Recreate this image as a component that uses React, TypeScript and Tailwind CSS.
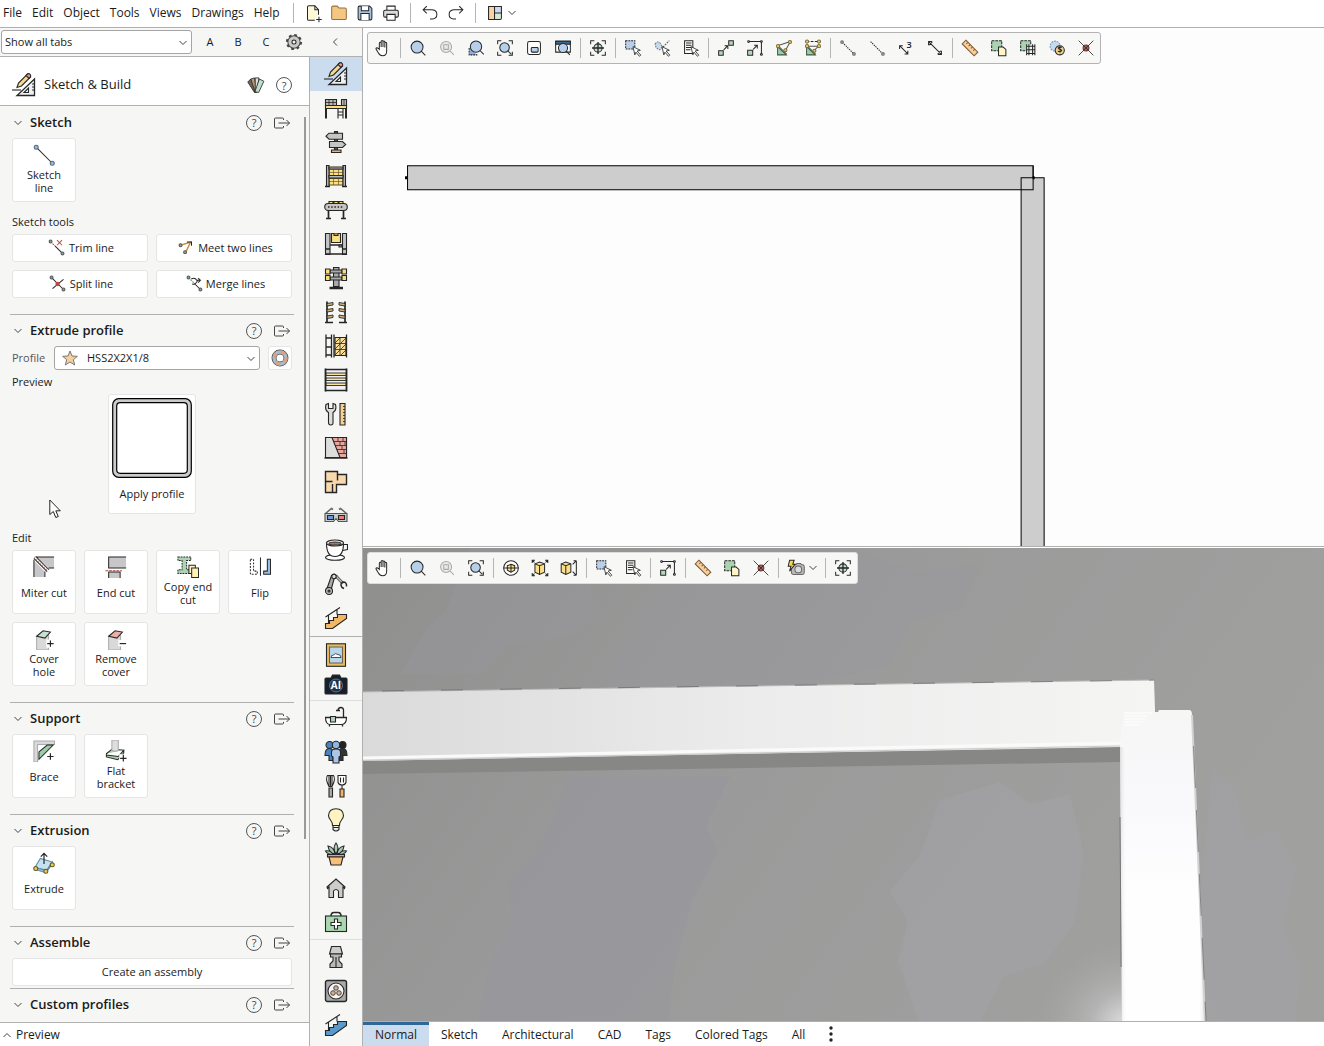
import React from "react";
import clsx from "clsx";

interface IconProps {
  children: React.ReactNode;
  className?: string;
}

const Icon: React.FC<IconProps> = ({ children, className = "h-6 w-6" }) => (
  <svg
    viewBox="0 0 24 24"
    className={clsx("shrink-0", className)}
    fill="none"
    stroke="#262626"
    strokeWidth="1.1"
    aria-hidden="true"
  >
    {children}
  </svg>
);

const Chevron = ({ className }: { className?: string }) => (
  <svg viewBox="0 0 10 10" className={clsx("h-[10px] w-[10px] shrink-0", className)} fill="none" stroke="#444">
    <path d="M1.5 3 5 6.5 8.5 3" />
  </svg>
);

/* shared pieces */

const magnifier = (
  <>
    <circle cx="11" cy="11" r="6.5" fill="#b8cfea" />
    <path d="m15.5 15.5 4.500 4.500" />
  </>
);

const corners = <path d="M4 8V4h4M16 4h4v4M20 16v4h-4M8 20H4v-4" />;

const pointer = <path d="m12 10.500 8 4-3.500.8 4 4.500-1.500 1.200-3.800-4.500-1.200 3z" fill="#fff" strokeWidth=".9" />;

const plus = <path d="M16 13.500v7M12.500 17h7" strokeWidth="1.3" />;

const cube = (
  <>
    <path d="m6.500 7.500 5-2 5.500 2v9l-5.500 2.500-5-2.500z" fill="#fbe089" />
    <path d="m6.500 7.500 5 2 5.500-2M11.500 9.500V19" />
  </>
);

const icons: Record<string, React.ReactNode> = {
  newFile: (
    <>
      <path d="M18 14V8.500L14 4H7.500Q6 4 6 5.500v13Q6 20 7.500 20H14" fill="#fff9d8" />
      <path d="M14 4v4.500h4M18.500 16v6M15.500 19h6" />
    </>
  ),
  folder: <path d="M4 6q0-1.500 1.500-1.500H10l2 2h6.500Q20 6.500 20 8v10q0 1-1 1H5q-1 0-1-1z" fill="#f3c684" stroke="#9c7038" />,
  save: (
    <>
      <path d="M4.500 6q0-1.500 1.500-1.500h11l2.500 2.500v11q0 1.500-1.500 1.500H6q-1.500 0-1.500-1.500z" fill="#a9c1e0" />
      <path d="M8 4.500v5h8v-5M7.500 19.500v-7h9v7" fill="#fff" />
    </>
  ),
  print: (
    <>
      <path d="M7.500 9V4.500h9V9" fill="#fff" />
      <rect x="4" y="9" width="16" height="7.500" rx="1.500" fill="#ddd" />
      <path d="M7.500 13.500h9V20h-9z" fill="#fff" />
    </>
  ),
  undo: <path d="M8.500 4.500 4.500 8.500l4 4M4.500 8.500h10q5 .5 5 5t-5 5H12" />,
  redo: <path d="m15.500 4.500 4 4-4 4M19.500 8.500h-10q-5 .5-5 5t5 5H12" />,
  layout: (
    <>
      <rect x="5" y="5" width="14" height="14" rx="1.500" fill="#d7e9d3" />
      <path d="M5 5h6.500v14H5z" fill="#f8d3a8" />
      <path d="M11.500 5H19v7h-7.500z" fill="#cbdcf0" />
    </>
  ),
  gear: (
    <>
      <circle cx="12" cy="12" r="7.700" strokeDasharray="3 3.050" strokeWidth="2.200" stroke="#444" />
      <circle cx="12" cy="12" r="6.700" fill="#c9c9c9" stroke="#444" />
      <circle cx="12" cy="12" r="2.200" fill="#f6f6f6" />
    </>
  ),
  hand: (
    <path
      d="M8 13.500V7q0-1.200 1-1.200T10 7v4V5q0-1.200 1-1.200t1 1.200v6-5.500q0-1.200 1-1.200t1 1.200v6-4.500q0-1.200 1-1.200T16 7v8.500q0 5-4.500 5-3 0-4.500-3l-2.500-4q-.5-1.500.8-1.700Q6.500 12 8 13.500z"
      fill="#fff"
    />
  ),
  zoom: magnifier,
  zoomPage: (
    <g stroke="#aaa">
      <circle cx="11" cy="11" r="6" fill="#e8e8e8" />
      <path d="m15.500 15.500 4 4M8.500 8.500h5v5h-5z" />
    </g>
  ),
  zoomArea: (
    <>
      <path d="M4.500 12v7.500h9" fill="#8fb1dc" strokeDasharray="2 1" />
      <circle cx="12" cy="10.500" r="6.200" fill="#b8cfea" />
      <path d="m16.500 15 4 4" />
    </>
  ),
  zoomFit: (
    <>
      {corners}
      <circle cx="11.500" cy="11.500" r="5.200" fill="#b8cfea" />
      <path d="m15 15 4 4" />
    </>
  ),
  panel: (
    <>
      <rect x="5" y="5" width="14" height="14" rx="2" fill="#fff" />
      <rect x="9" y="11.500" width="7.500" height="5" rx="1" fill="#b8cfea" />
    </>
  ),
  windowZoom: (
    <>
      <path d="M4 5h16v11.500H4z" fill="#fff" />
      <path d="M4 4.500h16V8H4z" fill="#386a94" />
      <circle cx="12" cy="12" r="5" fill="#b8cfea" />
      <path d="m15.500 15.500 4 4" />
    </>
  ),
  target: (
    <>
      {corners}
      <circle cx="12" cy="12" r="4.500" fill="#c3ddca" />
      <path d="M12 5.500v13M5.500 12h13" strokeWidth="1.400" />
    </>
  ),
  selectArea: (
    <>
      <path d="M4 4h10v9H4z" fill="#b8cfea" strokeDasharray="2 1" />
      {pointer}
    </>
  ),
  selectLine: (
    <>
      <path d="M4.500 8q2-4 5-2l3 5-3 3q-4-1-5-6z" fill="#c8daf0" strokeDasharray="2 1" stroke="#777" />
      <path d="m13 11 7-7" strokeDasharray="2 1" stroke="#555" />
      {pointer}
    </>
  ),
  selectList: (
    <>
      <path d="M5 4h9v14H5z" fill="#fff" />
      <path d="M6.500 6.500h6M6.500 9h6M6.500 11.500h6M6.500 14h5" />
      {pointer}
    </>
  ),
  connect: (
    <>
      <path d="M4 15h5v5H4zM15 4h5v5h-5z" fill="#b5d8bd" />
      <path d="m9.500 14 4.500-4.500M10.500 9.500H14V13" />
    </>
  ),
  moveCorner: (
    <>
      <path d="M5 5h14v14" />
      <path d="M4 14.500h5.500V20H4z" fill="#b5d8bd" />
      <path d="m10 13.500 4-4M11 9h3.500v3.500" />
      <g fill="#fff">
        <circle cx="5" cy="5" r="1" />
        <circle cx="19" cy="5" r="1" />
        <circle cx="19" cy="19" r="1" />
      </g>
    </>
  ),
  angle: (
    <>
      <path d="M5 10.500v9h9.500z" fill="#9dcba8" stroke="#3c5c44" />
      <path d="M5 9.500 19 5M6 10l9 9M19 5l-5 9" stroke="#555" />
      <g fill="#efcb69" stroke="#776a3c">
        <circle cx="5.500" cy="10" r="1.700" />
        <circle cx="18.500" cy="5.500" r="1.700" />
        <circle cx="13.500" cy="14.500" r="1.700" />
      </g>
    </>
  ),
  angleLock: (
    <>
      <path d="M5 10.500v9h9.500z" fill="#9dcba8" stroke="#3c5c44" />
      <path d="M5 5h14" strokeDasharray="3 1.500" />
      <path d="M5 10h14M6 10l9 9M18 10l-5 5" stroke="#555" />
      <g fill="#efcb69" stroke="#776a3c">
        <circle cx="5.500" cy="5" r="1.700" />
        <circle cx="18.500" cy="5" r="1.700" />
        <circle cx="5.500" cy="10" r="1.700" />
        <circle cx="18.500" cy="10" r="1.700" />
        <circle cx="13.500" cy="15" r="1.700" />
      </g>
    </>
  ),
  segment: (
    <>
      <path d="m6 6 12 12" strokeDasharray="1.500 1" />
      <g fill="#999" stroke="#777">
        <circle cx="5.500" cy="5.500" r="1.500" />
        <circle cx="18.500" cy="18.500" r="1.500" />
      </g>
    </>
  ),
  segmentEnd: (
    <>
      <path d="m5 5 13 13" strokeDasharray="1.500 1" />
      <circle cx="18.500" cy="18.500" r="1.500" fill="#999" stroke="#777" />
    </>
  ),
  arrowThree: (
    <>
      <path d="m5 9.500 9 9M5 13V9.500h3.500M14 15v3.500h-3.500" />
      <text x="12.500" y="12" fontSize="10" fontFamily="Open Sans, sans-serif" fontWeight="600" fill="#222" stroke="none">
        3
      </text>
    </>
  ),
  arrowBoth: <path d="m5 5 14 14M5 9V5h4M19 15v4h-4M9 5.500 5.500 9M18.500 15 15 18.500" />,
  ruler: (
    <>
      <path d="M7.500 3.500 20.500 16.500l-4 4L3.500 7.500z" fill="#f8cf9c" stroke="#7b5832" />
      <path d="M9.500 6 8 7.500M12 8.500 10.500 10M14.500 11 13 12.500M17 13.500 15.500 15" stroke="#7b5832" />
    </>
  ),
  copyShape: (
    <>
      <path d="M4 4h11v11H4z" fill="#a9d3b1" strokeDasharray="3 1" />
      <path d="M11.500 11h5l3 2.500v7h-8z" fill="#fff7c9" />
    </>
  ),
  copyTable: (
    <>
      <path d="M4 4h11v11H4z" fill="#a9d3b1" strokeDasharray="3 1" />
      <path d="M10.500 8.500h9v11h-9z" fill="#eef4ee" stroke="none" />
      <path d="M10.500 8v12M19.500 8v12M13 8v12M17 8v12M10.500 10h9M10.500 14h9M10.500 18h9" />
    </>
  ),
  price: (
    <>
      <circle cx="10" cy="10" r="5.500" fill="#c5daf1" stroke="#7692b4" strokeDasharray="2 1" />
      <circle cx="15" cy="14.500" r="5" fill="#f6cf8e" />
      <text x="12.500" y="17.700" fontSize="9" fontFamily="Open Sans, sans-serif" fontWeight="700" fill="#222" stroke="none">
        $
      </text>
    </>
  ),
  cross: (
    <>
      <circle cx="12" cy="12" r="3.200" fill="#a9655c" stroke="#733" />
      <path d="m4 4 16 16M20 4 4 20" strokeWidth=".9" />
    </>
  ),
  orbit: (
    <>
      <circle cx="12" cy="12" r="8" fill="#fff" />
      <path d="m8 9.500 4-1.500 4 1.500v5L12 16.500l-4-2z" fill="#fbe089" />
      <path d="M12 8v8.500M4 12h16" />
    </>
  ),
  cubeFit: (
    <>
      {cube}
      <path d="M3.500 6.500v-3h3M17.500 3.500h3v3M20.500 17.500v3h-3M6.500 20.500h-3v-3M3.500 3.500 6 6M20.500 3.500 18 6M20.500 20.500 18 18M3.500 20.500 6 18" />
    </>
  ),
  cubeSide: (
    <>
      <g transform="translate(-3 0)">{cube}</g>
      <path d="M20 4v16M17 4h3M17 20h3M19.500 4.500 16 8M19.500 19.500 16 16" />
    </>
  ),
  camera: (
    <>
      <path d="M9 8.500h3l1-1.500h4l1 1.500h1q2 0 2 2V17q0 2-2 2H9q-2 0-2-2v-6.500q0-2 2-2z" fill="#bbb" stroke="#666" />
      <circle cx="14.500" cy="13.500" r="3.700" fill="#ddd" stroke="#666" />
      <path d="M5 3.500h5L8.500 8h2.500l-6 7.500L6.500 10h-3z" fill="#f7d64d" />
    </>
  ),
};

const stairs = (fill: string) => (
  <>
    <path d="M1.500 22.500v-5h4v-3h4v-3h4v-3h9v4l-14 10z" fill={fill} />
    <path d="M1.500 11 16 1.500M4.500 9.500v8M13 3.500v5" />
  </>
);

const sketchIcon = (
  <>
    <path d="M22.500 6v16.500H5z" fill="#eef2f6" strokeWidth="1.300" />
    <path d="M16.500 15v4.500H12zM20 11h2M20 14h2M20 17h2" />
    <path d="M0 17h9" />
    <path d="m5 14.500 1.500-4.500 9-9 3 3-9 9z" fill="#f6d98f" />
    <path d="m14 2.500 1.500-1.500q1.500-.8 2.500.3t.5 2.700L17 5.500z" fill="#e39b95" />
  </>
);

interface RailItem {
  label: string;
  icon: React.ReactNode;
}

const railMain: RailItem[] = [
  { label: "Sketch & Build", icon: sketchIcon },
  {
    label: "Mezzanine",
    icon: (
      <>
        <path d="M1.500 3.500h11v6h-11zM17.500 3.500h5v6h-5z" fill="#bbb" />
        <path d="M5 3.500v6M9 3.500v6M1.500 6.500h11M20 3.500v6" strokeWidth=".8" />
        <path d="M1.500 9.500h21v3h-21z" fill="#fbdf7c" />
        <path d="M2 12.500v10M22 12.500v10" strokeWidth="2" />
        <path d="M14 12.500v10M19 12.500v10M14 16h5M14 19h5" />
      </>
    ),
  },
  {
    label: "Signs",
    icon: (
      <>
        <path d="M10.500 1.500h3v20h-3z" fill="#555" />
        <path d="m2 6.200 3-3h13.500v6H5zM5.500 11.500h13l3.200 3-3.200 3h-13z" fill="#c5c5c5" />
        <path d="M7.500 20h9.500v2.500H7.500z" fill="#e7b672" />
      </>
    ),
  },
  {
    label: "Pallet rack",
    icon: (
      <>
        <path d="M5 5h14v6.500H5zM5 14.500h14V21H5z" fill="#fbdf7c" strokeWidth=".8" />
        <path d="M9.500 5v6.500M14.500 5v6.500M9.500 14.500V21M14.500 14.500V21M5 8.500h14M5 17.500h14" stroke="#6b5a2b" strokeWidth=".7" />
        <path d="M2.500 1.500H5v21H2.500zM19 1.500h2.500v21H19z" fill="#bbb" />
        <path d="M5 3h14v2H5zM5 11.500h14v2.500H5z" fill="#bbb" />
        <path d="M1 22.500h5M18 22.500h5" strokeWidth="1.500" />
      </>
    ),
  },
  {
    label: "Conveyor",
    icon: (
      <>
        <path d="M5 3.500h4v2.500H5zM10 3.500h4v2.500h-4zM15 3.500h4v2.500h-4z" fill="#fbdf7c" />
        <rect x=".7" y="5.500" width="22.600" height="7" rx="3.500" fill="#c5c5c5" />
        <path d="M4 9h16" strokeWidth="1.500" strokeDasharray="1.500 1.700" />
        <path d="M4.500 12.500v8M19.500 12.500v8M2 20.500h5M17 20.500h5" strokeWidth="1.700" />
      </>
    ),
  },
  {
    label: "Lift",
    icon: (
      <>
        <path d="M1.500 1.500H6v21H1.500zM18.500 1.500h4v21h-4z" fill="#c5c5c5" />
        <path d="M6 13h12.500M1.500 22h21M1.500 17H6M18.500 17h4" strokeWidth="1.400" />
        <path d="M7.500 1.500h9v9h-9z" fill="#fbdf7c" />
        <path d="M10 1.500v2h4v-2M15 13h3v2h-3z" fill="#a89a78" />
      </>
    ),
  },
  {
    label: "Cantilever",
    icon: (
      <>
        <path d="M9.500 1.500H15v19H9.500z" fill="#aaa" />
        <path d="M6 4h12v3H6zM6 11h12v3H6z" fill="#aaa" />
        <path d="M1.500 3H6v5H1.500zM18 3h4.500v5H18zM1.500 9.500H6v5H1.500zM18 9.500h4.500v5H18z" fill="#fbdf7c" />
        <path d="M5.500 22h13.500" strokeWidth="2.500" />
      </>
    ),
  },
  {
    label: "Arm racks",
    icon: (
      <>
        <path d="M3 1.500v21M21 1.500v21M1 22.500h8M15 22.500h8" strokeWidth="1.700" />
        <path
          d="m3 3.500 6-1v2.500l-6 1zM3 9.500l6-1V11l-6 1zM3 16l6-1v2.500l-6 1zM21 3.500l-6-1v2.500l6 1zM21 9.500l-6-1V11l6 1zM21 16l-6-1v2.500l6 1z"
          fill="#d0b680"
          strokeWidth=".9"
        />
      </>
    ),
  },
  {
    label: "Shelving",
    icon: (
      <>
        <path d="M2 .5v23M7.500 .5v23M2 4h5.500M2 13h5.500M2 21h5.500" strokeWidth="1.300" />
        <path d="M11 3.500h11v18H11z" fill="#fbdf9c" />
        <path d="M10 .5v23M22.500 .5v23" strokeWidth="1.300" />
        <path d="M16 3.500v18M11 9.500h11M11 15.500h11M11 9l5-5M17 9l5-5M11 15l5-5M17 15l5-5M11 21l5-5M17 21l5-5" strokeWidth=".8" />
      </>
    ),
  },
  {
    label: "Shelves",
    icon: (
      <>
        <path d="M1.500 1.500h21v21h-21z" fill="#eef1f5" strokeWidth="1.400" />
        <path d="M2 5h20v2.500H2zM2 10h20v2.500H2zM2 15h20v2.500H2z" fill="#fbe3a4" strokeWidth=".9" />
        <path d="M1.500 .5v23M22.500 .5v23" strokeWidth="1.500" />
      </>
    ),
  },
  {
    label: "Tools",
    icon: (
      <>
        <path d="M2 2.500q-1.500 6 2.500 8v10q0 2.500 2.300 2.500T9 20.500v-10q4-2 2.500-8L9 1.500v5H4.500v-5z" fill="#ddd" />
        <path d="M16 1.500h5v21.500h-5z" fill="#f6cf93" />
        <path d="M19 4.500h2M19 7.500h2M19 10.500h2M19 13.500h2M19 16.500h2M19 19.500h2" strokeWidth=".8" />
      </>
    ),
  },
  {
    label: "Walls",
    icon: (
      <>
        <path d="M1.500 1.500h21v20h-21z" fill="#ddd" />
        <path d="M8 1.500h14.500v20H16z" fill="#e9a7a0" />
        <path
          d="M9 5.500h13.500M11 9.500h11.500M13 13.500h9.500M14.500 17.500h8M14 1.500v4M19 1.500v4M16 5.500v4M21 5.500v4M18 9.500v4M20 13.500v4"
          strokeWidth=".8"
        />
        <path d="M.5 22h23" strokeWidth="1.500" />
      </>
    ),
  },
  {
    label: "Rooms",
    icon: (
      <>
        <path d="M1.500 1.500h12v3h9v10h-10v8h-11z" fill="#f8d9ae" strokeWidth="1.400" />
        <path d="M1.500 11.500h7M8.500 14v8.500M13.500 4.500v6" strokeWidth="1.400" />
      </>
    ),
  },
  {
    label: "3D glasses",
    icon: (
      <>
        <path d="m1.500 9.500 6-5 1.500 1M22.500 9.500l-6-5-1.500 1" stroke="#666" strokeWidth="1.600" />
        <path d="M1 9.500h22v8h-8.500l-2.500-3-2.500 3H1z" fill="#ccc" stroke="#555" />
        <path d="M3.500 11.500h6v4h-6z" fill="#6b9ad4" />
        <path d="M14.500 11.500h6v4h-6z" fill="#e2827b" />
      </>
    ),
  },
  {
    label: "Cafe",
    icon: (
      <>
        <ellipse cx="11" cy="19.500" rx="9.500" ry="2.800" fill="#fff" />
        <path d="M2.500 5.500q0 13 8.500 13t8.500-13z" fill="#fff" />
        <ellipse cx="11" cy="5" rx="8.500" ry="3" fill="#fff" />
        <ellipse cx="11" cy="5.500" rx="6" ry="1.500" fill="#a77b50" />
        <path d="M19.500 6.500h4v5l-5 1" />
      </>
    ),
  },
  {
    label: "Robot arm",
    icon: (
      <>
        <path d="m2.500 18 5-14.500q2.500-3 5 0l1 1.500-2 1-1.500 1-3.500 13z" fill="#aaa" />
        <path d="m12 4 7 7.500" strokeWidth="3" stroke="#555" />
        <path d="m12 4 7 7.500" strokeWidth="1.200" stroke="#bbb" />
        <circle cx="5" cy="19" r="3.500" fill="#bbb" />
        <circle cx="5" cy="19" r="1" />
        <circle cx="10" cy="4.500" r="2.200" fill="#ddd" />
        <path d="M18 15.500q-2.500-4 1-5.500 4 0 3.500 4.500M18 15.500l2 1" strokeWidth="1.500" />
      </>
    ),
  },
  { label: "Stairs", icon: stairs("#f3b765") },
];

const railDecor: RailItem[] = [
  {
    label: "Pictures",
    icon: (
      <>
        <rect x="2.500" y=".8" width="19" height="22.500" fill="#e9bc62" />
        <path d="M5.500 4h13v16h-13z" fill="#b8d7ee" stroke="#6b6344" />
        <path d="M7 14.500q0-2.500 2.500-2.500 1.500-2.500 4.500-.5 3 0 3 3z" fill="#fff" strokeWidth=".8" />
      </>
    ),
  },
  {
    label: "AI render",
    icon: (
      <>
        <path d="M1 6q0-1 1-1h5l1.500-3h7L17 5h5q1 0 1 1v14q0 1-1 1H2q-1 0-1-1z" fill="#17202a" />
        <circle cx="12" cy="12.500" r="6.500" fill="#1e3248" stroke="#8fa3b8" strokeWidth=".6" />
        <text x="6.800" y="16.300" fontSize="10" fontFamily="Open Sans, sans-serif" fontWeight="700" fill="#fff" stroke="none">
          AI
        </text>
      </>
    ),
  },
];

const railObjects: RailItem[] = [
  {
    label: "Bathroom",
    icon: (
      <>
        <path d="M1.500 11.500h21q0 7-5 7h-11q-5 0-5-7z" fill="#fff" />
        <path d="M19.500 11.500V4q0-2.500-2.500-2.500T14 4M12 4.500h4M5.500 18.500v2M18.500 18.500v2M1 11.500h22" strokeWidth="1.300" />
        <path d="M6.500 10.500h5v5.500h-5z" fill="#b5cfc6" />
      </>
    ),
  },
  {
    label: "People",
    icon: (
      <>
        <circle cx="5.500" cy="5" r="3.500" fill="#4a82c0" />
        <circle cx="18.500" cy="5" r="3.500" fill="#222" />
        <path d="M1 15.500q0-7 4-7t4 3v9H5v-5z" fill="#4a82c0" />
        <path d="M23 15.500q0-7-4-7t-4 3v9h4v-5z" fill="#333" />
        <circle cx="12" cy="5" r="3.700" fill="#8fb6de" />
        <path d="M7.500 16v-4q0-3 4.500-3t4.500 3v4l-1.500 1v6H9v-6z" fill="#a9c6e6" />
      </>
    ),
  },
  {
    label: "Kitchen",
    icon: (
      <>
        <path d="M5 12.500Q1 5 3.500 1.500h6Q12 5 8 12.500zM5 1.500v11M8 1.500v11M6.500 1.500v11" fill="#fff" />
        <path d="M5 14h3.500v9H5z" fill="#aaa" />
        <path d="M14 1.500h8v7q-1 2.500-4 2.500t-4-2.500z" fill="#fff" />
        <path d="M16.500 3.500v5M19.500 3.500v5M18 11v4" />
        <path d="M16 15h4v8h-4z" fill="#f0b264" />
      </>
    ),
  },
  {
    label: "Lighting",
    icon: (
      <>
        <path d="M8.500 17.500q0-3-2-5.500-2-2.500-2-4.500Q5 .8 12 .8t7.500 6.700q0 2-2 4.500t-2 5.500z" fill="#fff3c2" />
        <path d="M9 17.500h6v4q-3 3-6 0zM9 19.500h6" fill="#eee" />
      </>
    ),
  },
  {
    label: "Plants",
    icon: (
      <>
        <path
          d="M12 12Q8 6 12 1q4 5 0 11zM11 12Q5 11 4 4q6 1 7 8zM13 12q6-1 7-8-6 1-7 8zM9 12.500Q4 13 1.500 9q5-1 7.500 3.500zM15 12.500q5 .5 7.500-3.500-5-1-7.500 3.500z"
          fill="#a8c8b5"
        />
        <path d="M3.500 12.500h17v2.500h-17z" fill="#ec9b90" />
        <path d="M5 15h14l-2 8H7z" fill="#f5c07b" />
      </>
    ),
  },
  {
    label: "Buildings",
    icon: (
      <path d="M5 21.500V11l-1.500 1.500-.5-1.500 9-8 9 8-.5 1.500L19 11v10.500h-4.500V15q-2.500-3-5 0v6.500z" fill="#ccc" />
    ),
  },
  {
    label: "Medical",
    icon: (
      <>
        <path d="M7 6q0-3.500 3-3.500h4q3 0 3 3.500" strokeWidth="1.500" />
        <rect x="1.500" y="6" width="21" height="15.500" fill="#a9d8b0" />
        <path d="M10.500 9h3v3.500H17v3h-3.500V19h-3v-3.500H7v-3h3.500z" fill="#fff" />
      </>
    ),
  },
];

const railExtras: RailItem[] = [
  {
    label: "Machine",
    icon: (
      <>
        <path d="M7.500 1.500h9l2 7.500h-13z" fill="#ccc" />
        <path d="M6.500 9h11v3H15v4l3 3v3.500H6V19l3-3v-4H6.500z" fill="#bbb" />
        <path d="M12 12v10.500" />
      </>
    ),
  },
  {
    label: "Ventilation",
    icon: (
      <>
        <rect x="1.500" y="1.500" width="21" height="21" rx="2" fill="#aaa" strokeWidth="1.400" />
        <circle cx="12" cy="12" r="8" fill="#f6f6f6" />
        <g fill="#d5b18d" strokeWidth=".8">
          <circle cx="12" cy="9" r="2.300" />
          <circle cx="9" cy="14" r="2.300" />
          <circle cx="15" cy="14" r="2.300" />
        </g>
      </>
    ),
  },
  { label: "Blue stairs", icon: stairs("#5b98cb") },
];

const post = <path d="M4 9v15h13V8z" fill="#d9d9d9" stroke="#aaa" />;

const tileIcons: Record<string, React.ReactNode> = {
  sketchLine: (
    <>
      <path d="m4 4 17 17" />
      <g fill="#9bb9d8" stroke="#536b84">
        <circle cx="3.500" cy="3.500" r="2.200" />
        <circle cx="21" cy="21" r="2.200" />
      </g>
    </>
  ),
  miter: (
    <>
      <path d="M5 1h18v12h-6z M1 5v18h12v-6z" fill="#c7c7c9" stroke="none" />
      <path d="M4 1h19M17 13h6M1 4v19M13 17v6M1 2.500l14.500 14.500M3 .5l14.500 14.500" />
      <path d="m1.500 1 15 15" stroke="#c97a76" strokeDasharray="1.500 1.500" />
    </>
  ),
  endCut: (
    <>
      <path d="M4 1h19v12H4z" fill="#c7c7c9" stroke="none" />
      <path d="M23 1H4v12h19" />
      <path d="M4 17.500h12.500V24H4z" fill="#c7c7c9" stroke="none" />
      <path d="M4 24v-6.500h12.500V24" />
      <path d="M.5 16h18" stroke="#a9443e" strokeDasharray="3 1" />
    </>
  ),
  copyEnd: (
    <>
      <path d="M1 1h14v4h-4.500v10H15v4H1v-4h4.500V5H1z" fill="#acd3b5" strokeDasharray="2 1" />
      <path d="M13 10h7v9h-7z" fill="#fff7c9" />
      <path d="M16 13h7.500v10.500H16z" fill="#fff2b5" />
    </>
  ),
  flip: (
    <>
      <path d="M1.500 3.500h3.500v13h4v3.500H1.500z" strokeDasharray="2 1.500" />
      <path d="M12.500 1.500v20" />
      <path d="M20 3.500h3.500V20H16v-3.500h4z" fill="#9bbde3" />
    </>
  ),
  cover: (
    <>
      {post}
      <path d="m4 9 7-6 8 1.500-6 6.500z" fill="#c5e2cd" />
      <path d="M14.500 12.500h8.500v9h-8.500z" fill="#fff" stroke="none" />
      <path d="M19 13.500v7M15.500 17h7" strokeWidth="1.300" />
    </>
  ),
  uncover: (
    <>
      {post}
      <path d="m4 9 7-6 8 1.500-6 6.500z" fill="#ecaea6" />
      <path d="M14.500 13h8.500v7h-8.500z" fill="#fff" stroke="none" />
      <path d="M16 17h7" strokeWidth="1.300" />
    </>
  ),
  brace: (
    <>
      <path d="M1 1h22.500v4H5v19H1z" fill="#d9d9d9" stroke="#aaa" />
      <path d="m6.500 13 9-7.500H22L6.500 21z" fill="#9dcca9" />
      <g transform="translate(3 1)">{plus}</g>
    </>
  ),
  bracket: (
    <>
      <path d="m1.500 15 6-5 13 1-6 7-13-1.500z M1.500 15v3.500l12.500 3L20.500 14v-3" fill="#a7ceb1" />
      <path d="M7.500 0v11q4 2.500 7 0V0z" fill="#ddd" stroke="#aaa" />
      <path d="M15.500 15.500h8v8h-8z" fill="#fff" stroke="none" />
      <path d="M20 16v7.500M16.500 20h7" strokeWidth="1.300" />
    </>
  ),
  extrude: (
    <>
      <path d="m2 17 6-10 13 4-6 9z" fill="#c5e3ef" stroke="#5f87a9" />
      <path d="M2 17v2l12 3.500 7-9V11l-6 9z" fill="#9cbde0" stroke="#5f87a9" />
      <path d="M12 13V1.500M8.500 5 12 1.500 15.500 5" strokeWidth="1.300" />
      <g fill="#efcb55" stroke="#665a24">
        <circle cx="3" cy="18" r="2.200" />
        <circle cx="14" cy="21" r="2.200" />
        <circle cx="21" cy="14" r="2.200" />
      </g>
    </>
  ),
};

const dot = (cx: number, cy: number) => <circle cx={cx} cy={cy} r="1.600" fill="#8fa3a0" stroke="#555" />;

const lineIcons: Record<string, React.ReactNode> = {
  trim: (
    <>
      <path d="m5 5 5 5" stroke="#c2453c" strokeDasharray="2 1" />
      <path d="m10 10 8.500 8.500" />
      <path d="M12 3.500 17.500 9M17.500 3.500 12 9" stroke="#c2453c" />
      {dot(5, 5)}
      {dot(18, 18)}
    </>
  ),
  meet: (
    <>
      <path d="m6 9 11-3.500L12 16" stroke="#c79035" strokeWidth="1.500" />
      <path d="M13 5.500h5v4" />
      {dot(6, 9)}
      {dot(11, 16.5)}
    </>
  ),
  split: (
    <>
      <path d="m5 5 13 13M18 7 6 17" />
      <circle cx="11.500" cy="12" r="1.800" fill="#b8473e" stroke="#b8473e" />
      {dot(5, 5)}
      {dot(18, 18)}
    </>
  ),
  merge: (
    <>
      <path d="m6 5 7 7" stroke="#5c9a9a" strokeDasharray="2 1" />
      <path d="m13 12 6 6M9 6.500q4-2 6 1.500h4M16.500 5.500 19 8l-2.500 2.500M10 12q4 1 6-4" />
      {dot(6, 5)}
      {dot(19, 18)}
    </>
  ),
};

const Help = () => (
  <button
    aria-label="Help"
    className="flex h-4 w-4 items-center justify-center rounded-full border border-[#555] text-[11px] leading-none text-[#444]"
  >
    ?
  </button>
);

interface SectionProps {
  title: string;
  children?: React.ReactNode;
  className?: string;
}

const Section: React.FC<SectionProps> = ({ title, children, className }) => (
  <section className={clsx("ml-[10px] mr-[15px] border-b border-[#b0b0b0] px-[2px] last:border-0", className)}>
    <div className="flex h-[31px] items-center pr-px">
      <button className="flex grow items-center gap-[7px]">
        <Chevron className="ml-px" />
        <h2 className="text-[13px] font-semibold">{title}</h2>
      </button>
      <Help />
      <button aria-label="Detach" className="ml-[11px]">
        <svg viewBox="0 0 18 16" className="h-4 w-[18px]" fill="none" stroke="#444">
          <path d="M10.500 5V4q0-1-1-1h-7q-1 0-1 1v8q0 1 1 1h7q1 0 1-1v-1M5.500 8h11M13.500 5l3 3-3 3" />
        </svg>
      </button>
    </div>
    {children}
  </section>
);

const Tile = ({ icon, label }: { icon: string; label: string }) => (
  <button className="flex h-16 flex-col items-center rounded-[3px] border border-[#e6e6e6] bg-white pt-[5px]">
    <Icon className="h-[22px] w-[22px]">{tileIcons[icon]}</Icon>
    <span className="flex grow items-center px-[6px] pb-[6px] text-center text-[11px] leading-[13px]">{label}</span>
  </button>
);

const LineButton = ({ icon, label }: { icon?: string; label: string }) => (
  <button className="flex h-7 items-center justify-center rounded-[3px] border border-[#e6e6e6] bg-white text-[11px]">
    {icon && <Icon className="mr-px h-[22px] w-[22px]">{lineIcons[icon]}</Icon>}
    {label}
  </button>
);

const RailGroup = ({ items, short, className }: { items: RailItem[]; short?: boolean; className?: string }) => (
  <div className={className}>
    {items.map(({ label, icon }) => (
      <button
        key={label}
        aria-label={label}
        className={clsx(
          "flex w-full items-center justify-center",
          short ? "h-[30px]" : "h-[34px]",
          label === "Sketch & Build" && "bg-[#cbdcef]"
        )}
      >
        <Icon>{icon}</Icon>
      </button>
    ))}
  </div>
);

const Toolbar = ({ groups, className }: { groups: string[][]; className?: string }) => (
  <div
    role="toolbar"
    className={clsx("absolute left-1 top-1 flex h-8 items-center rounded-[3px] border bg-[#f7f7f6]", className)}
  >
    {groups.map((group, i) => (
      <React.Fragment key={i}>
        {i > 0 && <span className="ml-[3px] mr-[2px] h-5 w-px bg-[#b5b5b5]" />}
        {group.map((name) => (
          <button
            key={name}
            aria-label={name}
            className={clsx("flex h-7 items-center justify-center", name === "camera" ? "w-[41px]" : "w-[29px]")}
          >
            <Icon className="h-[22px] w-[22px]">{icons[name]}</Icon>
            {name === "camera" && <Chevron className="ml-px" />}
          </button>
        ))}
      </React.Fragment>
    ))}
  </div>
);

const planTools = [
  ["hand"],
  ["zoom", "zoomPage", "zoomArea", "zoomFit", "panel", "windowZoom"],
  ["target"],
  ["selectArea", "selectLine", "selectList"],
  ["connect", "moveCorner", "angle", "angleLock"],
  ["segment", "segmentEnd", "arrowThree", "arrowBoth"],
  ["ruler", "copyShape", "copyTable", "price", "cross"],
];

const modelTools = [
  ["hand"],
  ["zoom", "zoomPage", "zoomFit"],
  ["orbit", "cubeFit", "cubeSide"],
  ["selectArea", "selectList"],
  ["moveCorner"],
  ["ruler", "copyShape", "cross"],
  ["camera"],
  ["target"],
];

const MenuBar = () => (
  <header className="flex h-7 shrink-0 items-center border-b border-[#b0b0b0] bg-white pb-px pl-[3px]">
    <nav className="flex gap-[10px] text-[12px]">
      {["File", "Edit", "Object", "Tools", "Views", "Drawings", "Help"].map((item) => (
        <button key={item}>{item}</button>
      ))}
    </nav>
    <div className="ml-[13px] flex items-center">
      {[["newFile", "folder", "save", "print"], ["undo", "redo"], ["layout"]].map((group, i) => (
        <div key={i} className="flex items-center border-l border-[#b5b5b5] px-[6px]">
          {group.map((name) => (
            <button key={name} aria-label={name} className="flex h-5 w-[26px] items-center justify-center">
              <Icon className="h-[22px] w-[22px]">{icons[name]}</Icon>
            </button>
          ))}
        </div>
      ))}
      <Chevron className="-ml-[7px]" />
    </div>
  </header>
);

const Panel = () => (
  <aside className="flex w-[310px] shrink-0 flex-col border-r border-[#b0b0b0]">
    <div className="flex h-[49px] shrink-0 items-center border-b border-[#b0b0b0] bg-white pl-3 pr-[17px] pt-2">
      <Icon>{sketchIcon}</Icon>
      <h1 className="ml-2 grow text-[13px]">Sketch &amp; Build</h1>
      <button aria-label="Materials" className="mr-[11px]">
        <Icon className="h-[18px] w-[18px]">
          <path d="M10 22 1 8l4-4 8 16z" fill="#6f675d" />
          <path d="M11 22 5 4l5-1.500 3 18z" fill="#b99a77" />
          <path d="M11 22V2.500h5L13 22z" fill="#ddd" />
          <path d="m10.500 21 6-17 6 3-7 15z" fill="#c0dfca" />
        </Icon>
      </button>
      <Help />
    </div>

    <div className="relative min-h-0 grow overflow-hidden">
      <div className="absolute right-[3px] top-[11px] h-[722px] w-[2px] bg-[#999]" />

      <Section title="Sketch" className="pb-4 pt-px">
        <div className="grid grid-cols-4 gap-2">
          <Tile icon="sketchLine" label="Sketch line" />
        </div>
        <h3 className="pt-2 text-[11px] leading-6">Sketch tools</h3>
        <div className="grid grid-cols-2 gap-2">
          <LineButton icon="trim" label="Trim line" />
          <LineButton icon="meet" label="Meet two lines" />
          <LineButton icon="split" label="Split line" />
          <LineButton icon="merge" label="Merge lines" />
        </div>
      </Section>

      <Section title="Extrude profile" className="pb-4">
        <div className="flex h-6 items-center">
          <label htmlFor="profile" className="w-[42px] text-[11px] text-[#555]">
            Profile
          </label>
          <div className="relative mr-2 flex grow">
            <select
              id="profile"
              className="h-6 w-full appearance-none rounded-[3px] border border-[#a5a5a5] bg-white pl-8 text-[11px]"
            >
              <option>HSS2X2X1/8</option>
            </select>
            <Icon className="pointer-events-none absolute left-2 top-1 h-4 w-4">
              <path
                d="m12 1.500 3 7.500 8 .5-6 5 2 8-7-4.500L5 22.500l2-8-6-5L9 9z"
                fill="#f6cf9d"
                stroke="#777"
                strokeWidth="1.500"
              />
            </Icon>
            <Chevron className="pointer-events-none absolute right-1 top-2" />
          </div>
          <button
            aria-label="Profile library"
            className="flex h-6 w-6 items-center justify-center rounded-[3px] border border-[#e6e6e6] bg-white"
          >
            <Icon className="h-[18px] w-[18px]">
              <circle cx="12" cy="12" r="8" stroke="#444" strokeWidth="6.500" />
              <circle cx="12" cy="12" r="8" stroke="#a9bccb" strokeWidth="4.500" />
              <circle cx="12" cy="12" r="8" stroke="#d8a385" strokeWidth="4.500" strokeDasharray="6.280 6.280" />
            </Icon>
          </button>
        </div>
        <h3 className="text-[11px] leading-6">Preview</h3>
        <button className="mx-auto flex h-[120px] w-[88px] flex-col items-center rounded-[3px] border border-[#e6e6e6] bg-white pt-[3px] text-[11px]">
          <svg viewBox="0 0 80 80" className="h-20 w-20" fill="#cbcbcb" stroke="#000" strokeWidth="1.200">
            <rect x=".7" y=".7" width="78.600" height="78.600" rx="6" />
            <rect x="4.700" y="4.700" width="70.600" height="70.600" rx="3.500" fill="#fff" />
          </svg>
          <span className="mt-2">Apply profile</span>
        </button>
        <h3 className="pt-3 text-[11px] leading-6">Edit</h3>
        <div className="grid grid-cols-4 gap-2">
          <Tile icon="miter" label="Miter cut" />
          <Tile icon="endCut" label="End cut" />
          <Tile icon="copyEnd" label="Copy end cut" />
          <Tile icon="flip" label="Flip" />
          <Tile icon="cover" label="Cover hole" />
          <Tile icon="uncover" label="Remove cover" />
        </div>
      </Section>

      <Section title="Support" className="pb-4">
        <div className="grid grid-cols-4 gap-2">
          <Tile icon="brace" label="Brace" />
          <Tile icon="bracket" label="Flat bracket" />
        </div>
      </Section>

      <Section title="Extrusion" className="pb-4">
        <div className="grid grid-cols-4 gap-2">
          <Tile icon="extrude" label="Extrude" />
        </div>
      </Section>

      <Section title="Assemble" className="pb-[2px]">
        <div className="grid">
          <LineButton label="Create an assembly" />
        </div>
      </Section>

      <Section title="Custom profiles" />
    </div>

    <button className="flex h-6 shrink-0 items-center gap-1 border-t border-[#b0b0b0] bg-white pl-[2px] text-[12px]">
      <Chevron className="rotate-180" />
      Preview
    </button>
  </aside>
);

const PlanView = () => (
  <section className="relative min-h-0 flex-[519] overflow-hidden border-b border-[#b0b0b0] bg-[#fdfdfd]">
    <svg viewBox="363 28 961 518" preserveAspectRatio="xMinYMin slice" className="h-full w-full" stroke="#000">
      <path d="M407.500 165.500h625v24h-625z" fill="#cdcdcd" />
      <path d="M1020.500 177.500h23v380h-23z" fill="#cdcdcd" />
      <path d="M1032.500 165.500v24h-12" fill="none" />
      <path d="M405 177.500h2M1032 177.500h2" strokeWidth="3" />
    </svg>
    <Toolbar groups={planTools} className="border-[#b3b3b3]" />
  </section>
);

const ModelView = () => (
  <section className="relative mt-px min-h-0 flex-[473] overflow-hidden bg-[#999]">
    <svg viewBox="363 548 961 473" preserveAspectRatio="xMinYMin slice" className="h-full w-full">
      <defs>
        <linearGradient id="wall" x1="0" y1="0" x2="1" y2=".35">
          <stop offset="0" stopColor="#8f8f8e" />
          <stop offset=".4" stopColor="#999999" />
          <stop offset="1" stopColor="#a0a09f" />
        </linearGradient>
        <linearGradient id="beam" x1="0" y1="0" x2="1" y2="0">
          <stop offset="0" stopColor="#dadada" />
          <stop offset=".5" stopColor="#ececec" />
          <stop offset="1" stopColor="#f5f5f4" />
        </linearGradient>
        <linearGradient id="leg" x1="0" y1="0" x2="0" y2="1">
          <stop offset="0" stopColor="#f6f6f5" />
          <stop offset=".3" stopColor="#f9f9fc" />
          <stop offset=".6" stopColor="#fefefe" />
        </linearGradient>
        <linearGradient id="edge" x1="0" y1="0" x2="1" y2="0">
          <stop offset="0" stopColor="#d4d4d4" />
          <stop offset=".08" stopColor="#fff" stopOpacity="0" />
          <stop offset=".92" stopColor="#fff" stopOpacity="0" />
          <stop offset="1" stopColor="#d0d0d0" />
        </linearGradient>
        <radialGradient id="glow">
          <stop offset="0" stopColor="#e4e4e4" />
          <stop offset=".4" stopColor="#b8b8b8" stopOpacity=".8" />
          <stop offset="1" stopColor="#a2a2a2" stopOpacity="0" />
        </radialGradient>
      </defs>
      <path d="M363 548h961v473H363z" fill="url(#wall)" />
      {/* uneven plaster tone, bluish then warm bands */}
      <path d="M470 548h130l-10 40 12 22-30 26-62 8-28 30H400l26-44 20-20zM690 548h160l70 24 60-8-20 44-50 12-20 44-90 22-200 6 34-60 30-40z" fill="#9797a0" opacity=".35" />
      <path d="M570 776h160l-24 50 12 26-26 48-18 70-6 51H478l12-60 24-32-6-46 34-42z" fill="#9696a0" opacity=".4" />
      <path d="M940 800l60-18 30 22 40-10 14 60-10 70-30 40-40 12-24 45h-62l-20-60 10-40-18-30 30-36z" fill="#a3a3aa" opacity=".45" />
      <path d="M1212 770l24 20 10 50 30-10 20 40-14 60 20 40-8 51h-86l-8-120z" fill="#a3a3aa" opacity=".4" />
      <ellipse cx="1128" cy="1025" rx="95" ry="85" fill="url(#glow)" />
      <path d="m363 760 757-15v17L363 774z" fill="#878786" />
      <path d="m363 692 791-12 1 30v36l-35 1-757 14z" fill="url(#beam)" />
      <path d="m363 692 791-12" stroke="#bcbcbc" />
      <path d="m382 691 772-11" stroke="#666" strokeWidth=".7" strokeDasharray="22 37" />
      <path d="m363 758 760-15" stroke="#fafafa" strokeWidth="3" />
      <path d="m363 760.500 757-14.500" stroke="#c9c9c9" />
      <path d="M1124 712h34l1-2h30q3 0 3 5l13 306h-83l-2-276z" fill="url(#leg)" />
      <path d="M1120 747h74l11 274h-83z" fill="url(#edge)" opacity=".7" />
      <path d="m1192 715 13 306" stroke="#d2d2d2" strokeWidth="2" />
      <path d="m1193.500 746 12.500 275" stroke="#666" strokeWidth=".7" strokeDasharray="42 22" />
      <path d="m1119.500 747 2 274" stroke="#777" strokeDasharray="0 70 150 20" />
      <path d="M1124 713h28M1124 716h24M1124 719h21M1124 722h19M1124 725h16" stroke="#fff" />
    </svg>
    <Toolbar groups={modelTools} className="border-[#dcdcdc]" />
  </section>
);

const displayModes = ["Normal", "Sketch", "Architectural", "CAD", "Tags", "Colored Tags", "All"];

const App: React.FC = () => (
  <div className="relative flex h-screen flex-col overflow-hidden bg-[#f6f6f5] font-['Open_Sans','Noto_Sans',sans-serif] text-[#1a1a1a]">
    <MenuBar />
    <div className="flex min-h-0 grow">
      <div className="flex w-[363px] shrink-0 flex-col border-r border-[#b0b0b0]">
        <div className="flex h-[29px] shrink-0 items-center border-b border-[#b0b0b0] text-[11px]">
          <div className="relative ml-px flex w-[191px]">
            <select
              aria-label="Tabs"
              className="h-6 w-full appearance-none rounded-[3px] border border-[#a5a5a5] bg-white pl-[3px] text-[11px]"
            >
              <option>Show all tabs</option>
            </select>
            <Chevron className="pointer-events-none absolute right-1 top-2" />
          </div>
          {["A", "B", "C"].map((tab) => (
            <button key={tab} className="w-7 first-of-type:ml-1">
              {tab}
            </button>
          ))}
          <button aria-label="Settings" className="w-7">
            <Icon className="mx-auto h-[22px] w-[22px]">{icons.gear}</Icon>
          </button>
          <button aria-label="Collapse" className="ml-[22px]">
            <Chevron className="rotate-90" />
          </button>
        </div>
        <div className="flex min-h-0 grow">
          <Panel />
          <div className="flex min-w-0 grow flex-col">
            <RailGroup items={railMain} />
            <RailGroup items={railDecor} short className="mt-px border-t border-[#b0b0b0] pt-[3px]" />
            <RailGroup items={railObjects} className="border-t border-[#dedede]" />
            <RailGroup items={railExtras} className="border-t border-[#dedede]" />
          </div>
        </div>
      </div>

      <main className="flex min-w-0 grow flex-col bg-white">
        <PlanView />
        <ModelView />
        <nav className="flex h-[25px] shrink-0 items-stretch border-t border-[#b0b0b0] text-[12px]">
          {displayModes.map((mode, i) => (
            <button
              key={mode}
              className={clsx(
                "border-t-[3px] px-3 pb-[2px] leading-none",
                i === 0 ? "border-[#2f6797] bg-[#cbdcef]" : "border-transparent"
              )}
            >
              {mode}
            </button>
          ))}
          <button aria-label="More" className="px-3">
            <svg viewBox="0 0 4 18" className="h-[18px] w-1" fill="#222">
              <circle cx="2" cy="3" r="1.700" />
              <circle cx="2" cy="9" r="1.700" />
              <circle cx="2" cy="15" r="1.700" />
            </svg>
          </button>
        </nav>
      </main>
    </div>

    <svg
      viewBox="0 0 13 20"
      className="pointer-events-none absolute left-[49px] top-[499px] h-5 w-[13px]"
      fill="#fff"
      stroke="#222"
    >
      <path d="M.8 1v14.500l3.500-3 2.500 6 2.500-1-2.500-5.700h4.500z" />
    </svg>
  </div>
);

export default App;
